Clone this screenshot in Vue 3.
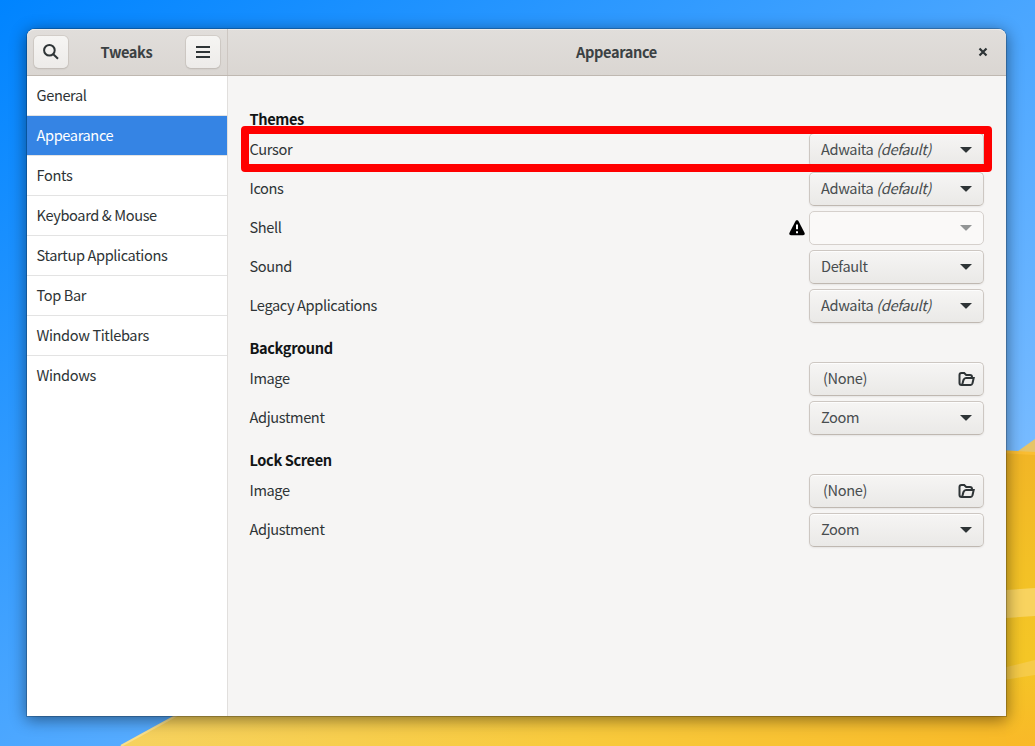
<script setup>
const pages = ['General', 'Appearance', 'Fonts', 'Keyboard & Mouse', 'Startup Applications', 'Top Bar', 'Window Titlebars', 'Windows']
const active = 'Appearance'
const sections = [
  {
    title: 'Themes',
    rows: [
      { label: 'Cursor', value: 'Adwaita', note: '(default)', marked: true },
      { label: 'Icons', value: 'Adwaita', note: '(default)' },
      { label: 'Shell', value: '', disabled: true },
      { label: 'Sound', value: 'Default' },
      { label: 'Legacy Applications', value: 'Adwaita', note: '(default)' },
    ],
  },
  { title: 'Background', rows: [{ label: 'Image', value: '(None)', file: true }, { label: 'Adjustment', value: 'Zoom' }] },
  { title: 'Lock Screen', rows: [{ label: 'Image', value: '(None)', file: true }, { label: 'Adjustment', value: 'Zoom' }] },
]
</script>

<template>
  <div class="desktop">
    <svg class="wallpaper" width="1035" height="746" viewBox="0 0 1035 746">
      <defs>
        <linearGradient id="sky" gradientUnits="userSpaceOnUse" x1="0" y1="0" x2="564" y2="805">
          <stop offset="0" stop-color="#0084ff" />
          <stop offset="1" stop-color="#7abcff" />
        </linearGradient>
        <linearGradient id="sand" gradientUnits="userSpaceOnUse" x1="120" y1="0" x2="1035" y2="0">
          <stop offset="0" stop-color="#f6d25f" />
          <stop offset="0.5" stop-color="#f8ca3c" />
          <stop offset="1" stop-color="#f8b927" />
        </linearGradient>
        <linearGradient id="dune" x1="0" y1="0" x2="0" y2="1">
          <stop offset="0" stop-color="#f1b526" />
          <stop offset="0.4" stop-color="#f3c126" />
          <stop offset="0.7" stop-color="#f4c626" />
          <stop offset="1" stop-color="#f9b928" />
        </linearGradient>
      </defs>
      <rect width="1035" height="746" fill="url(#sky)" />
      <path d="M1014 454L1035 439V458Z" fill="#e6c468" />
      <path d="M121 746L181 713H1035V746Z" fill="url(#sand)" />
      <path d="M121 746L181 713" stroke="#f8df8c" stroke-width="2" />
      <path d="M1006 451L1035 453V746H1006Z" fill="url(#dune)" />
      <path d="M990 451L1035 453.500" stroke="#fabd32" stroke-width="3" />
      <path d="M990 591L1035 588V616L990 619Z" fill="#f8d35f" />
      <path d="M990 671L1035 660V675L990 682Z" fill="#f6cb48" />
    </svg>

    <main class="window">
      <header class="titlebar">
        <div class="side-head">
          <button class="tool" aria-label="Search">
            <svg width="18" height="18" viewBox="0 0 18 18"><circle cx="7.400" cy="7.200" r="5.300" /><path d="M11.300 11.200L16 15.700" /></svg>
          </button>
          <span class="name">Tweaks</span>
          <button class="tool" aria-label="Menu">
            <svg width="18" height="18" viewBox="0 0 18 18"><path d="M2 4h14M2 9h14M2 14h14" /></svg>
          </button>
        </div>
        <div class="main-head">
          <span class="name">Appearance</span>
          <svg class="close" width="10" height="10" viewBox="0 0 10 10"><path d="M1.500 1.500L8.500 8.500M8.500 1.500L1.500 8.500" /></svg>
        </div>
      </header>

      <div class="body">
        <nav class="sidebar">
          <div v-for="p in pages" :key="p" class="page" :class="{ active: p === active }"><span>{{ p }}</span></div>
        </nav>
        <div class="content">
          <section v-for="s in sections" :key="s.title">
            <h2>{{ s.title }}</h2>
            <div v-for="r in s.rows" :key="r.label" class="row">
              <span class="label">{{ r.label }}</span>
              <svg v-if="r.disabled" class="warn" width="16" height="16" viewBox="0 0 16 16">
                <path d="M8 .3C8.900 .3 9.300 .8 9.700 1.500L15.400 12.500C16.200 14.200 15.600 15.300 14 15.300H2C.4 15.300-.2 14.200 .6 12.500L6.300 1.500C6.700 .8 7.100 .3 8 .3Z" />
                <path d="M8 4.500V9.300M8 11.200V13.200" stroke="#fff" stroke-width="2" />
              </svg>
              <div class="control" :class="{ disabled: r.disabled, file: r.file }">
                <span class="value">{{ r.value }} <em v-if="r.note">{{ r.note }}</em></span>
                <svg v-if="r.file" class="folder" width="17" height="16" viewBox="0 0 17 16">
                  <path d="M4.200 14H3.500C2 14 1.500 13.300 1.500 12V4C1.500 2.500 2 2 3.500 2H6.200L8.200 4H12C13.500 4 14 4.700 14 6V7M3.500 14C5 13.500 4.500 11.200 5.500 9C6.100 7.700 6.800 7 8 7H15.700L14.500 12.300C14.100 13.600 13.600 14 12.500 14Z" />
                </svg>
                <svg v-else class="arrow" width="12" height="6" viewBox="0 0 12 6"><path d="M0 0H12L6.700 5.300Q6 6 5.300 5.300Z" /></svg>
              </div>
              <div v-if="r.marked" class="marker"></div>
            </div>
          </section>
        </div>
      </div>
    </main>
  </div>
</template>

<style>
body { margin: 0; overflow: hidden; }
</style>

<style scoped>
* { box-sizing: border-box; }
.desktop {
  position: relative;
  width: 1035px;
  height: 746px;
  padding: 29px 29px 30px 27px;
  overflow: hidden;
  font-family: "Noto Sans CJK SC", "Noto Sans", sans-serif;
  font-size: 14.600px;
  letter-spacing: -.38px;
  line-height: 20px;
  color: #2e3436;
}
.wallpaper { position: absolute; inset: 0; }
.window {
  position: relative;
  display: flex;
  flex-direction: column;
  width: 979px;
  height: 687px;
  border-radius: 8px 8px 0 0;
  background: #f6f5f4;
  box-shadow: 0 0 0 1px rgba(0, 0, 0, .2), 0 3px 16px 1px rgba(0, 0, 0, .45);
}
.titlebar {
  display: flex;
  height: 47px;
  border-bottom: 1px solid #bfb8b1;
  border-radius: 8px 8px 0 0;
  background: linear-gradient(#e1dedb, #dad6d2);
  box-shadow: inset 0 1px #edebe9;
}
.side-head {
  display: flex;
  align-items: center;
  justify-content: space-between;
  width: 201px;
  padding: 0 7px;
  border-right: 1px solid #cdc7c2;
}
.tool {
  display: grid;
  place-items: center;
  width: 34px;
  height: 32px;
  padding: 0;
  border: 0;
  border-radius: 5px;
  background: linear-gradient(#f6f5f3, #edebe9);
  box-shadow: 0 0 0 1px rgba(190, 182, 174, .4), 0 1px 2px rgba(0, 0, 0, .12);
}
.tool svg, .close, .folder { fill: none; stroke: #2e3436; stroke-width: 2; }
.name { padding-right: 1px; font-weight: 700; color: #3b4143; }
.main-head {
  flex: 1;
  display: grid;
  grid-template-columns: 1fr auto 1fr;
  align-items: center;
}
.main-head .name { grid-column: 2; }
.close { justify-self: end; margin-right: 18px; stroke-width: 2.200; }
.body { flex: 1; display: flex; min-height: 0; }
.sidebar { width: 201px; border-right: 1px solid #e1dfdd; background: #fff; }
.page {
  display: flex;
  align-items: center;
  height: 40px;
  padding: 0 0 2px 9.500px;
  border-bottom: 1px solid #e3e3e3;
}
.page:last-child { border-color: transparent; }
.page.active { background: #3584e4; color: #fff; }
.content { flex: 1; display: flex; flex-direction: column; gap: 16px; padding: 34px 22px 0; }
section { display: flex; flex-direction: column; gap: 5px; }
h2 { height: 18px; margin: 0; font-size: 14.600px; font-weight: 700; line-height: 18px; color: #111415; }
h2, .label { text-indent: -.5px; }
.row { position: relative; display: flex; align-items: center; height: 34px; }
.label { flex: 1; }
.label, .value { padding-bottom: 2px; }
.warn { margin-right: 4px; fill: #000; }
.control {
  display: flex;
  align-items: center;
  justify-content: space-between;
  width: 175px;
  height: 34px;
  padding: 0 11px;
  border: 1px solid #cdc7c2;
  border-bottom-color: #bfb8b1;
  border-radius: 5px;
  background: linear-gradient(#f6f5f4, #eae9e7);
  box-shadow: inset 0 1px rgba(255, 255, 255, .8), 0 1px 2px rgba(0, 0, 0, .07);
  color: #484d4f;
}
.control.file { padding: 0 8px 0 13px; }
.control.disabled { background: #faf9f8; border-color: #d5d0cc; box-shadow: none; }
.arrow { fill: #2e3436; }
.disabled .arrow { fill: #929595; }
.marker {
  position: absolute;
  left: -9px;
  right: -8px;
  top: -7px;
  height: 46px;
  border: 8px solid #f00;
  border-radius: 4px;
}
</style>
